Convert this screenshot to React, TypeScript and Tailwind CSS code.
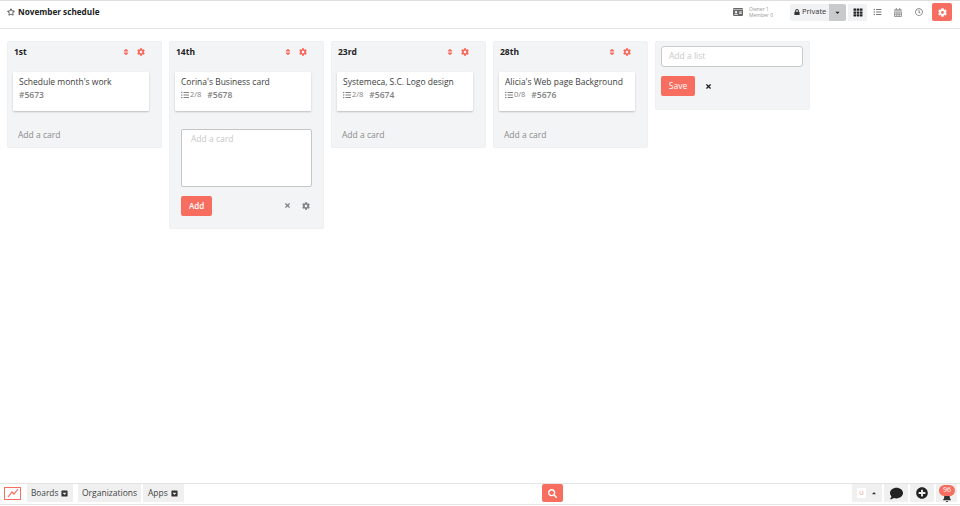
import React from 'react';
import { FaRegStar, FaLock, FaCaretDown, FaCaretUp, FaTh, FaCalendarAlt, FaRegClock, FaCog, FaSort, FaTimes, FaSearch, FaPlusCircle, FaComment, FaBell, FaIdCard, FaCaretSquareDown, FaListUl } from 'react-icons/fa';

interface CardInfo {
  title: string;
  id: string;
  tasks?: string;
}

interface ListInfo {
  name: string;
  card: CardInfo;
  adding?: boolean;
}

const lists: ListInfo[] = [
  { name: '1st', card: { title: "Schedule month's work", id: '#5673' } },
  { name: '14th', card: { title: "Corina's Business card", id: '#5678', tasks: '2/8' }, adding: true },
  { name: '23rd', card: { title: 'Systemeca, S.C. Logo design', id: '#5674', tasks: '2/8' } },
  { name: '28th', card: { title: "Alicia's Web page Background", id: '#5676', tasks: '0/8' } },
];

const Card = ({ card }: { card: CardInfo }) => (
  <div className="h-[39px] w-[136px] rounded-[1px] bg-white pl-[6px] pt-[3px] shadow-[0_1px_2px_rgba(0,0,0,0.22)]">
    <div className="text-[8.5px] leading-[13px] whitespace-nowrap text-[#3d3d3d]">{card.title}</div>
    <div className="flex items-center text-[#808080] leading-[13px]">
      {card.tasks && (
        <span className="mr-[6px] flex items-center text-[7.5px]">
          <FaListUl className="mr-[1px] h-[8px] w-[8px]" />
          {card.tasks}
        </span>
      )}
      <span className="text-[8.5px] font-semibold">{card.id}</span>
    </div>
  </div>
);

const ListColumn = ({ list }: { list: ListInfo }) => (
  <div className="w-[155px] shrink-0 rounded-[2px] border border-[#eef0f2] bg-[#f3f4f6] pl-[5px]">
    <div className="flex h-[20px] items-center justify-between pr-[16px] mb-[10px]">
      <span className="text-[8.5px] font-bold text-[#222] pl-[1px]">{list.name}</span>
      <div className="flex items-center gap-[8px] text-[#f7695d]">
        <FaSort className="h-[8px] w-[6px]" />
        <FaCog className="h-[8px] w-[8px]" />
      </div>
    </div>
    <Card card={list.card} />
    {list.adding ? (
      <div className="pl-[6px] pt-[18px] pb-[12px]">
        <div className="h-[58px] w-[131px] rounded-[2px] border border-[#c4c6c8] bg-white pl-[9px] pt-[3px] text-[8.5px] text-[#c8c8c8]">
          Add a card
        </div>
        <div className="mt-[8px] flex h-[21px] w-[131px] items-center justify-between">
          <div className="flex h-[20px] w-[31px] items-center justify-center rounded-[2px] bg-[#f76e60] text-[8px] font-semibold text-white">
            Add
          </div>
          <div className="flex items-center gap-[11px] pr-[2px] text-[#808488]">
            <FaTimes className="h-[7px] w-[7px]" />
            <FaCog className="h-[8px] w-[8px]" />
          </div>
        </div>
      </div>
    ) : (
      <div className="pt-[17px] pb-[6px] pl-[5px] text-[8.5px] leading-[13px] text-[#8c8c8c]">Add a card</div>
    )}
  </div>
);

const App = () => {
  return (
    <div className="flex h-[506px] w-[960px] flex-col overflow-hidden bg-white font-['Open_Sans',sans-serif]">
      {/* Top bar */}
      <header className="flex h-[29px] shrink-0 items-center border-y border-t-[#dfdfdf] border-b-[#e4e4e4] pb-[5px] pl-[7px] pr-[8px]">
        <FaRegStar className="h-[8px] w-[8px] text-[#333]" />
        <span className="ml-[3px] text-[8.2px] font-bold text-[#222]">November schedule</span>
        <div className="ml-auto flex items-center">
          <FaIdCard className="mr-[6px] h-[10px] w-[10px] text-[#666]" />
          <div className="mr-[16px] w-[25px] text-[5px] leading-[6px] whitespace-nowrap text-[#999]">
            <div>Owner 1</div>
            <div>Member 0</div>
          </div>
          <div className="flex h-[17px] w-[39px] items-center rounded-l-[2px] bg-[#f1f2f3] pl-[4px] text-[7.5px] text-[#333]">
            <FaLock className="mr-[2px] h-[6px] w-[6px]" />
            Private
          </div>
          <div className="flex h-[17px] w-[17px] items-center justify-center rounded-r-[2px] bg-[#c9cacb] text-[#222]">
            <FaCaretDown className="h-[7px] w-[7px]" />
          </div>
          <div className="ml-[2px] flex h-[17px] w-[19px] items-center justify-center bg-[#f1f2f3] text-[#222]">
            <FaTh className="h-[9px] w-[10px]" />
          </div>
          <FaListUl className="ml-[6px] h-[8px] w-[9px] text-[#777]" />
          <FaCalendarAlt className="ml-[12px] h-[9px] w-[8px] text-[#999]" />
          <FaRegClock className="ml-[13px] h-[8px] w-[8px] text-[#777]" />
          <div className="ml-[9px] flex h-[18px] w-[20px] items-center justify-center rounded-[2px] bg-[#f76e60] text-white">
            <FaCog className="h-[9px] w-[9px]" />
          </div>
        </div>
      </header>

      {/* Board */}
      <main className="flex flex-1 items-start gap-[7px] pl-[7px] pt-[12px]">
        {lists.map((list) => (
          <ListColumn key={list.name} list={list} />
        ))}
        <div className="h-[69px] w-[155px] shrink-0 rounded-[2px] border border-[#eef0f2] bg-[#f3f4f6] pl-[5px] pt-[4px]">
          <div className="flex h-[21px] w-[142px] items-center rounded-[3px] border border-[#c8cacc] bg-white pl-[7px] text-[8.5px] text-[#c8c8c8]">
            Add a list
          </div>
          <div className="mt-[9px] flex items-center">
            <div className="flex h-[20px] w-[34px] items-center justify-center rounded-[2px] bg-[#f76e60] text-[8.5px] text-white">
              Save
            </div>
            <FaTimes className="ml-[10px] h-[7px] w-[7px] text-[#222]" />
          </div>
        </div>
      </main>

      {/* Bottom bar */}
      <footer className="mb-px flex h-[22px] shrink-0 items-center border-y border-[#e4e4e4] pb-[2px] pl-[4px] pr-[3px]">
        <div className="flex h-[13px] w-[17px] items-center justify-center border-[1.5px] border-[#f76e60]">
          <svg viewBox="0 0 14 10" className="h-[10px] w-[14px]" fill="none" stroke="#f76e60" strokeWidth="1.2">
            <path d="M2 9 L6 4 L8 6 L12 1" />
          </svg>
        </div>
        <div className="ml-[6px] flex h-[18px] w-[46px] items-center bg-[#f0f0f0] pl-[4px] text-[8.3px] text-[#444]">
          Boards
          <FaCaretSquareDown className="ml-[3px] h-[7px] w-[7px] text-[#333]" />
        </div>
        <div className="ml-[5px] flex h-[18px] w-[63px] items-center bg-[#f0f0f0] pl-[4px] text-[8.5px] text-[#444]">Organizations</div>
        <div className="ml-[2px] flex h-[18px] w-[41px] items-center bg-[#f0f0f0] pl-[5px] text-[8.5px] text-[#444]">
          Apps
          <FaCaretSquareDown className="ml-[3px] h-[7px] w-[7px] text-[#333]" />
        </div>
        <div className="ml-[358px] flex h-[18px] w-[21px] items-center justify-center rounded-[2px] bg-[#f76e60] text-white">
          <FaSearch className="h-[9px] w-[9px]" />
        </div>
        <div className="ml-auto flex h-[18px] w-[30px] items-center bg-[#f0f0f0] pl-[5px]">
          <div className="flex h-[10px] w-[9px] items-center justify-center bg-white text-[6px] leading-none text-[#e08a70]">U</div>
          <FaCaretUp className="ml-[5px] h-[6px] w-[6px] text-[#333]" />
        </div>
        <div className="ml-[2px] flex h-[18px] w-[24px] items-center justify-center bg-[#f0f0f0] text-[#222]">
          <FaComment className="h-[13px] w-[15px]" />
        </div>
        <div className="ml-[2px] flex h-[18px] w-[24px] items-center justify-center bg-[#f0f0f0] text-[#222]">
          <FaPlusCircle className="h-[12px] w-[12px]" />
        </div>
        <div className="relative ml-[2px] flex h-[18px] w-[21px] items-end justify-center bg-[#f0f0f0] text-[#333]">
          <FaBell className="h-[9px] w-[10px]" />
          <span className="absolute left-[3px] top-[1px] flex h-[11px] w-[16px] items-center justify-center rounded-full bg-[#f76e60] text-[7px] text-white">
            96
          </span>
        </div>
      </footer>
    </div>
  );
};

export default App;
